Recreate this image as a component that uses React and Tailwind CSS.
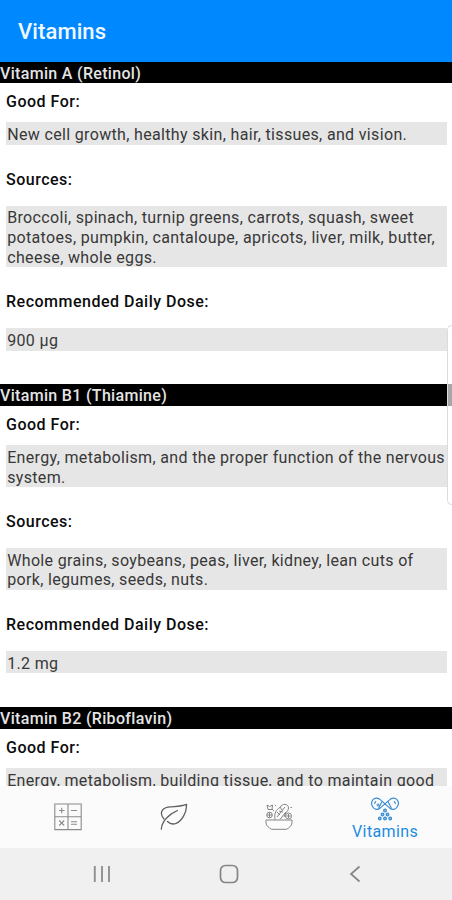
const vitamins = [
  {
    name: 'Vitamin A (Retinol)',
    goodFor: ['New cell growth, healthy skin, hair, tissues, and vision.'],
    sources: [
      'Broccoli, spinach, turnip greens, carrots, squash, sweet',
      'potatoes, pumpkin, cantaloupe, apricots, liver, milk, butter,',
      'cheese, whole eggs.',
    ],
    dose: ['900 μg'],
  },
  {
    name: 'Vitamin B1 (Thiamine)',
    goodFor: ['Energy, metabolism, and the proper function of the nervous', 'system.'],
    sources: [
      'Whole grains, soybeans, peas, liver, kidney, lean cuts of',
      'pork, legumes, seeds, nuts.',
    ],
    dose: ['1.2 mg'],
  },
  {
    name: 'Vitamin B2 (Riboflavin)',
    goodFor: ['Energy, metabolism, building tissue, and to maintain good'],
  },
];

const Label = ({ children, first }) => (
  <h3
    className={`pl-1.5 text-[16px] leading-5 font-medium tracking-[0.5px] text-[#0c0c0c] ${
      first ? 'pt-[8.9px] pb-[10.3px]' : 'pt-[24.7px] pb-[16px]'
    }`}
  >
    {children}
  </h3>
);

const Value = ({ lines }) => (
  <div className="mr-[5px] ml-1.5 bg-[#e6e6e6] pt-[2.8px] pb-[0.2px] pl-[1.2px] text-[16px] leading-[19.6px] tracking-[0.34px] text-[#383838]">
    {lines.map((line) => (
      <p key={line} className="whitespace-nowrap">{line}</p>
    ))}
  </div>
);

const Vitamin = ({ vitamin }) => (
  <section className="pb-[33.7px]">
    <h2 className="h-[21.6px] bg-black text-[16px] leading-[24.6px] font-medium tracking-[0.32px] whitespace-nowrap text-[#e4e4e4]">
      {vitamin.name}
    </h2>
    <Label first>Good For:</Label>
    <Value lines={vitamin.goodFor} />
    {vitamin.sources && (
      <>
        <Label>Sources:</Label>
        <Value lines={vitamin.sources} />
      </>
    )}
    {vitamin.dose && (
      <>
        <Label>Recommended Daily Dose:</Label>
        <Value lines={vitamin.dose} />
      </>
    )}
  </section>
);

const CalculatorIcon = () => (
  <svg width="28" height="28" viewBox="0 0 28 28" fill="none" stroke="#8a8a8a" strokeWidth="1.1">
    <path d="M.8 1h26.4v25.6H.8zM14 1v25.6M.8 13.8h26.4" />
    <path d="M5 7.500h5.500M7.700 4.700v5.600M17 7.500h6M5.200 17.500l5 5M10.200 17.500l-5 5M17 18.800h6M17 21.300h6" />
  </svg>
);

const LeafIcon = () => (
  <svg width="28" height="28" viewBox="0 0 28 28" fill="none" stroke="#606060" strokeWidth="1.3" strokeLinecap="round" strokeLinejoin="round">
    <path d="M1.300 26.200C1.800 19 8 11.500 17.500 7.500" />
    <path d="M4 16C-.8 10.500 1.500 5.500 8 4.200C14 3.200 20 3.800 26.500 1.300C27 9 22 18 16 20.400C12.500 21.700 9.500 20.500 7.500 18.500" />
  </svg>
);

const SaladIcon = () => (
  <svg width="28" height="28" viewBox="0 0 28 28" fill="none" stroke="#858585" strokeWidth="1" strokeLinejoin="round">
    <path d="M1 17h26v3c0 2.500-3 5-5.500 6.300h-15C4 25 1 22.500 1 20z" />
    <path d="M10 16.500c-1-6 1-10 5-12c2-4.500 8.500-4 8.500.5c0 2-1.500 4-3.500 5l-5 6.500M12 14l8-10M14 8l4 1M15 4l2 3M12 9l3 3" />
    <circle cx="4.500" cy="12" r="2.800" />
    <path d="M2 12h5M4.500 9.500v5M2 2l2.500 1.500L7.500 2l-.5 4.500H3zM7 6l2 2" />
    <circle cx="23.500" cy="13" r="3" />
    <path d="M21.500 13h4M23.500 11v4M19 14l2-5M25.500 4.500h1.500M10 2.500h1" />
  </svg>
);

const VitaminsIcon = () => (
  <svg width="28" height="24" viewBox="0 0 28 24" fill="none" stroke="#368bd2" strokeWidth="1.100">
    <path d="M9 11.200C6.500 13.200 3.600 12.600 2 10.200C.200 7.800.200 4.800 2 2.600S7.500.700 9.500 2.800L18.800 11.200C21.300 13.200 24.400 12.600 26 10.200C27.800 7.800 27.800 4.800 26 2.600S20.500.700 18.500 2.800z" />
    <path d="M7.500 11.500l3.500-7M20.500 11.500l-3.500-7M5 4.200c-1 .7-1.500 1.600-1.300 2.800M23 4.200c1 .7 1.500 1.600 1.300 2.800M5.500 8h3M7 6.500v3" />
    <g fill="#8abdea">
      <circle cx="14" cy="13.500" r="1.400" />
      <circle cx="11.500" cy="17.500" r="1.400" />
      <circle cx="16.500" cy="17.500" r="1.400" />
      <circle cx="8.800" cy="21.500" r="1.400" />
      <circle cx="14" cy="21.500" r="1.400" />
      <circle cx="19.200" cy="21.500" r="1.400" />
    </g>
  </svg>
);

const TabBar = () => (
  <nav className="grid h-[62px] shrink-0 grid-cols-4 bg-[#fbfbfb] pr-[14px] pl-[15px]">
    <button className="flex justify-center pt-[17px]" aria-label="Calculator"><CalculatorIcon /></button>
    <button className="flex justify-center pt-[17px]" aria-label="Nutrition"><LeafIcon /></button>
    <button className="flex justify-center pt-[17px]" aria-label="Foods"><SaladIcon /></button>
    <button className="flex flex-col items-center pt-[11px] text-[#218bdf]">
      <VitaminsIcon />
      <span className="pt-px text-[16px] leading-5 tracking-[0.4px]">Vitamins</span>
    </button>
  </nav>
);

const SystemBar = () => (
  <div className="flex h-[52px] shrink-0 items-center bg-[#f0f0f0] pl-[93px]">
    <svg width="18" height="18" viewBox="0 0 18 18" stroke="#909090" strokeWidth="1.900">
      <path d="M1.800 1v16M9 1v16M16 1v16" />
    </svg>
    <svg className="ml-[107.5px]" width="20" height="20" viewBox="0 0 20 20" fill="none" stroke="#858585" strokeWidth="1.700">
      <rect x="1.500" y="1.500" width="17" height="17" rx="5" />
    </svg>
    <svg className="ml-[110px]" width="12" height="18" viewBox="0 0 12 18" fill="none" stroke="#858585" strokeWidth="1.700">
      <path d="M10.500 1.500L2 9l8.500 7.500" />
    </svg>
  </div>
);

const App = () => {
  return (
    <div className="relative flex h-[900px] w-[452px] flex-col overflow-hidden bg-white font-['Roboto',sans-serif]">
      <header className="flex h-[61.6px] shrink-0 items-center bg-[#0088ff] pt-[2px] pl-[18px]">
        <h1 className="text-[22px] leading-7 font-medium tracking-[0.1px] text-[#f2f8ff]">Vitamins</h1>
      </header>

      <main className="min-h-0 flex-1 overflow-hidden">
        {vitamins.map((vitamin) => (
          <Vitamin key={vitamin.name} vitamin={vitamin} />
        ))}
      </main>

      <TabBar />
      <SystemBar />

      {/* edge panel handle */}
      <div className="absolute top-[325px] -right-1 h-[180px] w-[9px] rounded-md border border-[#dcdcdc] bg-white/65" />
    </div>
  );
};

export default App;
